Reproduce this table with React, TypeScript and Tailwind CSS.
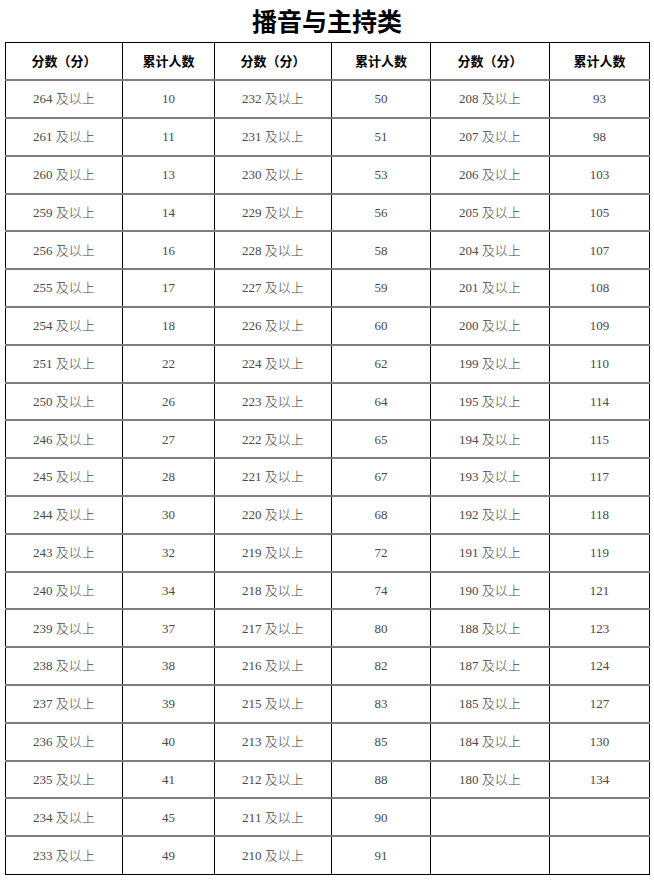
const left: [number, number][] = [
  [264, 10], [261, 11], [260, 13], [259, 14], [256, 16], [255, 17], [254, 18],
  [251, 22], [250, 26], [246, 27], [245, 28], [244, 30], [243, 32], [240, 34],
  [239, 37], [238, 38], [237, 39], [236, 40], [235, 41], [234, 45], [233, 49],
];

const middle: [number, number][] = [
  [232, 50], [231, 51], [230, 53], [229, 56], [228, 58], [227, 59], [226, 60],
  [224, 62], [223, 64], [222, 65], [221, 67], [220, 68], [219, 72], [218, 74],
  [217, 80], [216, 82], [215, 83], [213, 85], [212, 88], [211, 90], [210, 91],
];

const right: [number, number][] = [
  [208, 93], [207, 98], [206, 103], [205, 105], [204, 107], [201, 108], [200, 109],
  [199, 110], [195, 114], [194, 115], [193, 117], [192, 118], [191, 119], [190, 121],
  [188, 123], [187, 124], [185, 127], [184, 130], [180, 134],
];

const headers = ['分数（分）', '累计人数', '分数（分）', '累计人数', '分数（分）', '累计人数'];

const Cell = ({ value }: { value?: string }) => (
  <td className="border-x border-black text-center align-middle text-[13px] text-[#4a4a4a]">
    {value ?? ''}
  </td>
);

const App = () => {
  return (
    <div className="w-[654px] h-[882px] bg-white">
      <h1 className="h-[42px] pt-[5px] text-center text-[25px] leading-[30px] font-semibold text-black [font-family:'Noto_Sans_CJK_SC',serif]">
        播音与主持类
      </h1>

      <table className="ml-[5px] w-[644px] table-fixed border-collapse [font-family:'Liberation_Serif','Noto_Sans_CJK_SC',serif]">
        <colgroup>
          <col className="w-[117px]" />
          <col className="w-[92px]" />
          <col className="w-[117px]" />
          <col className="w-[99px]" />
          <col className="w-[119px]" />
          <col className="w-[100px]" />
        </colgroup>
        <thead>
          <tr className="h-[37.8px] border-t border-b-2 border-t-black border-b-[#7d7d7d]">
            {headers.map((h, i) => (
              <th
                key={i}
                className="border-x border-black text-center align-middle text-[13px] font-bold text-black [font-family:'Noto_Sans_CJK_SC',sans-serif]"
              >
                {h}
              </th>
            ))}
          </tr>
        </thead>
        <tbody className="font-light">
          {left.map((row, i) => {
            const last = i === left.length - 1;
            const r = right[i];
            return (
              <tr
                key={i}
                className={`h-[37.8px] ${last ? 'border-b border-black' : 'border-b-2 border-[#7d7d7d]'}`}
              >
                <Cell value={`${row[0]} 及以上`} />
                <Cell value={`${row[1]}`} />
                <Cell value={`${middle[i][0]} 及以上`} />
                <Cell value={`${middle[i][1]}`} />
                <Cell value={r ? `${r[0]} 及以上` : undefined} />
                <Cell value={r ? `${r[1]}` : undefined} />
              </tr>
            );
          })}
        </tbody>
      </table>
    </div>
  );
};

export default App;
